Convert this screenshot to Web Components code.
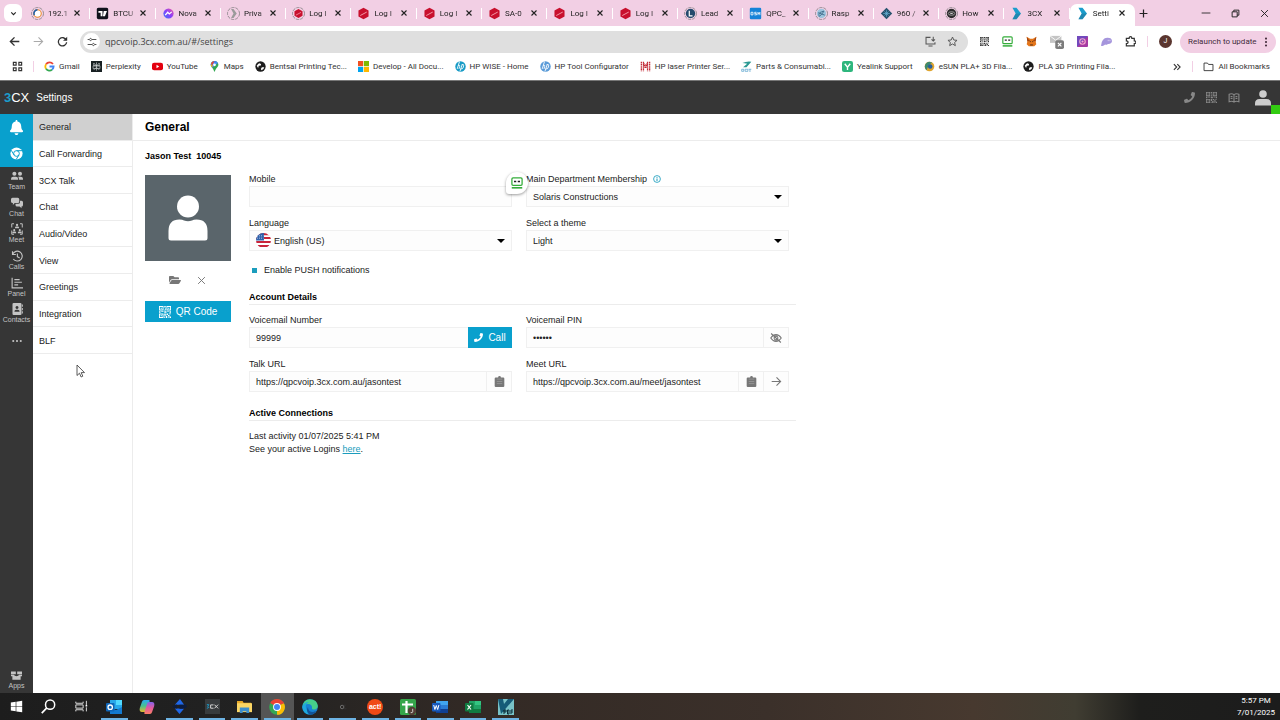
<!DOCTYPE html>
<html lang="en">
<head>
<meta charset="utf-8">
<title>Settings</title>
<style>
html,body{margin:0;height:100%}
body{font-family:"Liberation Sans",Arial,sans-serif;font-size:9px;color:#222;background:#fff}
desktop-shell{min-height:100vh}
</style>
</head>
<body>
<desktop-shell></desktop-shell>
<script>
const base = `*{box-sizing:border-box}button{font:inherit;color:inherit;background:none;border:0;padding:0;margin:0;cursor:pointer}a{color:inherit;text-decoration:none}`;
function define(name, css, html) {
  customElements.define(name, class extends HTMLElement {
    constructor() {
      super();
      this.attachShadow({ mode: 'open' }).innerHTML =
        `<style>${base}${css}</style>` + (typeof html === 'function' ? html(this) : html);
    }
  });
}
const box = (s, vb = '0 0 16 16') => `<svg viewBox="${vb}" aria-hidden="true">${s}</svg>`;
const line = (d, w = 1.6) => box(`<path d="${d}" fill="none" stroke="currentColor" stroke-width="${w}"/>`);
const ring = inner => box(`<circle cx="8" cy="8" r="7.4" fill="none" stroke="#777" stroke-width=".9" stroke-dasharray="4 1.2"/>${inner}`);
const person = (x, y, s) => `<g transform="translate(${x} ${y}) scale(${s})"><circle cx="5" cy="3" r="2.8"/><path d="M0 11V9.6Q0 6.6 3 6.6h4q3 0 3 3V11z"/></g>`;
const phone = 'M493.4 24.6l-104-24c-11.3-2.6-22.9 3.3-27.5 13.9l-48 112c-4.2 9.8-1.4 21.3 6.9 28l60.6 49.6c-36 76.7-98.9 140.5-177.2 177.2l-49.6-60.6c-6.8-8.3-18.2-11.1-28-6.9l-112 48C3.9 366.5-2 378.1.6 389.4l24 104C27.1 504.2 36.7 512 48 512c256.1 0 464-207.5 464-464 0-11.2-7.7-20.9-18.6-23.4z';
const red = '<path d="M8 1l6.2 3.4v7.2L8 15l-6.2-3.4V4.4z" fill="#c8102e"/><path d="M4 10.5l8-4.3" stroke="#f7a6b4" stroke-width="1.1"/>';
const robo = '<rect x="1.2" y="1.2" width="13.6" height="10" rx="1.5" fill="none" stroke="#35ad3b" stroke-width="1.7"/><path d="M4 6h3M9 6h3" stroke="#222" stroke-width="2"/><path d="M1 14.4h14" stroke="#35ad3b" stroke-width="2.2"/>';
const globe = '<circle cx="8" cy="8" r="7.5" fill="#1d1d1d"/><path d="M2.5 7q3-4 5-3.500t1 3l-3 .5-1 3zM10 9h3.500q-1 4-4 4.500l-1-2z" fill="#fff"/>';
const qr = '<path fill-rule="evenodd" d="M0 0h6v6H0zM1.200 1.200v3.600h3.600V1.200zM10 0h6v6h-6zM11.200 1.200v3.600h3.600V1.200zM0 10h6v6H0zM1.200 11.200v3.600h3.600v-3.600zM2.200 2.200h1.600v1.600H2.200zM12.200 2.200h1.600v1.600h-1.600zM2.200 12.200h1.600v1.600H2.200zM7 0h2v2H7zM8 3h1v3H7V5h1zM0 7h2v2H0zM3 7h3v1H3zM7 7h3v2H7zM11 7h2v1h-2zM14 7h2v2h-2zM10 10h2v2h-2zM13 10h3v1h-3zM7 10h2v3H7zM9 13h2v3H9zM12 12h2v2h-2zM14 14h2v2h-2zM12 15h1v1h-1zM7 14h1v2H7z"/>';
const hp = c => box(`<circle cx="8" cy="8" r="7.6" fill="${c}"/><path d="M6.500 1L3.200 11.500M4.800 6.500q3-1 2 1.500L5.800 11.500M10.500 5L7.200 15M9.800 5.200q3.500-.8 2.800 1.800l-1 3.300q-.6 1.400-3.200 1.200" fill="none" stroke="#fff" stroke-width="1.300"/>`);
const ICONS = {
  chev: line('M4 6l4 4 4-4', 2), x: line('M3 3l10 10M13 3L3 13', 2.200), xthin: line('M2 2l12 12M14 2L2 14', 1.700),
  plus: line('M8 1v14M1 8h14', 2.200), min: line('M1 8h14', 1.400),
  restore: line('M2 5h9v9H2zM5 5V2h9v9h-3', 1.700),
  back: line('M15 8H2M8 2L2 8l6 6', 2), fwd: line('M1 8h13M8 2l6 6-6 6', 1.600),
  reload: box('<path d="M13.500 6A6 6 0 1 0 14 9" fill="none" stroke="currentColor" stroke-width="1.900"/><path d="M14.800 1v6h-6z" fill="currentColor"/>'),
  tune: line('M1 4h2.500M8 4h7M1 12h7M12.500 12H15M5.700 2.200a1.800 1.800 0 1 0 .01 0M10.300 10.200a1.800 1.800 0 1 0 .01 0', 1.600),
  install: line('M8 2H1.500v9.500h13V9M5 14.500h6M12 1v6M9.500 4.800L12 7.300l2.500-2.500', 1.500),
  star: line('M8 1.500l1.900 4.300 4.700.5-3.500 3.100 1 4.600L8 11.600 3.900 14l1-4.600L1.400 6.300l4.700-.5z', 1.400),
  dots: box('<g fill="currentColor"><circle cx="8" cy="2.500" r="1.700"/><circle cx="8" cy="8" r="1.700"/><circle cx="8" cy="13.500" r="1.700"/></g>'),
  hdots: box('<g fill="currentColor"><circle cx="2" cy="8" r="1.700"/><circle cx="8" cy="8" r="1.700"/><circle cx="14" cy="8" r="1.700"/></g>'),
  puzzle: line('M2 3.500h4Q6 1 8 1t2 2.500h3.500V7Q16 7 16 9t-2.500 2v3.500H2V11q2.500 0 2.500-2T2 7z', 1.800),
  grid: line('M2 2h4v4H2zM10 2h4v4h-4zM2 10h4v4H2zM10 10h4v4h-4z', 1.700),
  more: line('M3 3.500L7.500 8 3 12.500M8.500 3.500L13 8l-4.500 4.500', 1.700),
  folder: line('M1.500 3h5l1.500 2h6.500v9h-13z', 1.300),
  f192: ring('<circle cx="8" cy="8" r="4.600" fill="#fff" stroke="#e98b2a" stroke-width="1.300"/><path d="M4 10a4.600 4.600 0 0 1 4-6.600" fill="none" stroke="#1d5fa8" stroke-width="2"/>'),
  tv: box('<rect x="1" y="1" width="14" height="14" rx="2" fill="#10131c"/><path d="M3 5h5v6.500H5.700V7H3zM9.500 5h4L11 11.500H8.500z" fill="#fff"/>'),
  nova: box('<defs><linearGradient id="g" x1="0" y1="1" x2="1" y2="0"><stop stop-color="#3478f6"/><stop offset=".5" stop-color="#8a3ffc"/><stop offset="1" stop-color="#f5569b"/></linearGradient></defs><circle cx="8" cy="8" r="6.300" fill="url(#g)"/><path d="M4 10l3-3.500 2 2L12 6" fill="none" stroke="#fff" stroke-width="1.600"/>'),
  priv: ring('<path d="M5 2.500h3L12 8l-4 5.500H5L8 8z" fill="#9b9b9b"/>'),
  logring: ring('<g transform="translate(1.600 1.600) scale(.8)">' + red + '</g>'), log: box(red),
  lead: ring('<circle cx="8" cy="8" r="5.800" fill="#234a6c"/><path d="M6.500 4.500v6.500h4" fill="none" stroke="#fff" stroke-width="1.500"/>'),
  osm: box('<rect x="1" y="1" width="14" height="14" rx="1.500" fill="#1683d8"/><path d="M2.500 6.500h2.400v3.200H2.500zM9.300 6.500H7v1.600h2.200v1.600H6.700M11 10V6.500l1.200 2 1.200-2V10" fill="none" stroke="#fff" stroke-width="1"/>'),
  rasp: ring('<circle cx="8" cy="8" r="5.700" fill="#9cc5dd"/><path d="M5 11q-1-4 3-5l3-1-2 3-4 4M4 7l8 3" fill="none" stroke="#44708e" stroke-width="1.200"/>'),
  d960: box('<path d="M8 1l7 7-7 7-7-7z" fill="#27536e"/><path d="M8 4v8M4 8h8M5.500 5.500l5 5M10.500 5.500l-5 5" stroke="#69b5d8" stroke-width=".8"/>'),
  how: ring('<circle cx="8" cy="8" r="5.800" fill="#2b2b2b"/><ellipse cx="8" cy="8" rx="4" ry="2.200" fill="none" stroke="#aaa"/><path d="M6.500 8h3" stroke="#ccc" stroke-width="1.500"/>'),
  tcx: box('<path d="M3 1h5l5.500 7L8 15H3l4-7z" fill="#1b9dcc"/><path d="M3 15l4-7h6.500L8 15z" fill="#27627f" opacity=".35"/>'),
  qr: box(`<g fill="currentColor">${qr}</g>`), robo: box(robo),
  fox: box('<path d="M1 1l5 3h4l5-3-1 7 1 4-3 3H4l-3-3 1-4z" fill="#e4761b"/><path d="M5 7l2 1.500M11 7L9 8.500M6 13h4" stroke="#442a17" stroke-width="1.300"/><path d="M1 1l4 6-3 1zM15 1l-4 6 3 1z" fill="#9c4315"/>'),
  mail: box('<path d="M0 1h13v8H0z" fill="#c4c4c4"/><path d="M0 1l6.500 5L13 1" fill="none" stroke="#fff"/><rect x="6" y="6" width="10" height="10" rx="2" fill="#7c7c7c"/><path d="M9 9l4 4M13 9l-4 4" stroke="#fff" stroke-width="1.300"/>'),
  shot: box('<rect width="16" height="16" rx="1.500" fill="#a53aa2"/><path d="M0 0h16L0 16z" fill="#7149bd"/><circle cx="8" cy="8" r="4" fill="none" stroke="#f4a5cc" stroke-width="1.700"/><circle cx="8" cy="8" r="1.500" fill="#f7b0d0"/>'),
  ghost: box('<path d="M0 14Q1 3 9 2.500q7-.2 7 5-1 4.500-6 4-2 2-4 1-3 3-6 1.500z" fill="#a595dc"/><path d="M10.500 5.500v2M13 5.500v2" stroke="#fff" stroke-width=".8"/>'),
  google: box('<g fill="none" stroke-width="2.600"><path d="M13 4.500A6 6 0 0 0 3 4.700" stroke="#ea4335"/><path d="M3 4.700a6 6 0 0 0 0 6.600" stroke="#fbbc05"/><path d="M3 11.300a6 6 0 0 0 8.800 1.200" stroke="#34a853"/><path d="M11.800 12.500Q14 10.500 14 8H8" stroke="#4285f4"/></g>'),
  perp: box('<rect width="16" height="16" fill="#182022"/><path d="M8 2v12M4 3l4 4 4-4v4H4zM3 7h10v4H3zM4 13l4-4 4 4" fill="none" stroke="#d4dad9" stroke-width=".9"/>'),
  yt: box('<rect y="2.500" width="16" height="11" rx="3" fill="#e3000f"/><path d="M6.500 5.500l4 2.500-4 2.500z" fill="#fff"/>'),
  maps: box('<path d="M8 16Q7 12 4 9a5.400 5.400 0 1 1 8 0q-3 3-4 7z" fill="#34a853"/><path d="M3.800 2.200A5.500 5.500 0 0 1 13 3L5 9.800Q1 6 3.800 2.200z" fill="#4285f4"/><path d="M3 4.500L5.500 7 4.500 9.500Q2 7 3 4.500z" fill="#fbbc05"/><path d="M3.800 2.200A5.500 5.500 0 0 1 8 .2L4.500 6 3 4.500z" fill="#ea4335"/><circle cx="8" cy="5.500" r="2" fill="#fff"/>'),
  globe: box(globe),
  ms: box('<path d="M0 0h7.500v7.500H0z" fill="#f25022"/><path d="M8.500 0H16v7.500H8.500z" fill="#7fba00"/><path d="M0 8.500h7.500V16H0z" fill="#00a4ef"/><path d="M8.500 8.500H16V16H8.500z" fill="#ffb900"/>'),
  hp1: hp('#189bc6'), hp2: hp('#5a9bd8'),
  laser: box('<path d="M2 1v14M5 1v14M11 1v14M14 1v14M5 3l3 4 3-4M5 6l3 4 3-4" fill="none" stroke="#c22a36" stroke-width="1.900" stroke-dasharray="2 .7"/>'),
  dot: box('<path d="M2 3Q8 0 15 1L8 9H3l6-5q-4-1-7-1z" fill="#2b9a93"/><path d="M1 12h3v3H1zM6 12h4v3H6zM11 12h4M13 12v4" fill="none" stroke="#4e9dcb" stroke-width="1"/>'),
  yea: box('<rect width="16" height="16" rx="3" fill="#2eb67d"/><path d="M4 4l4 5 4-5M8 9v4" fill="none" stroke="#fff" stroke-width="2"/>'),
  esun: box('<circle cx="8" cy="8" r="7" fill="#e0a52e"/><path d="M8 1a7 7 0 0 0-4 12.500Q6 5 12 2.500z" fill="#3d8a6f"/><circle cx="9" cy="8" r="3.300" fill="#265f9d"/>'),
  phone: box(`<path fill="currentColor" d="${phone}"/>`, '0 0 512 512'),
  book: line('M8 3.500Q5 1.500 1.500 3v10Q5 11.500 8 13.500 11 11.500 14.500 13V3Q11 1.500 8 3.500v10M3.500 6h2.500M3.500 8.500h2.500M10 6h2.500M10 8.500h2.500', 1.500),
  user: box('<g fill="currentColor"><circle cx="8" cy="4" r="3.800"/><path d="M0 15.500v-2Q0 9 4.500 9h7Q16 9 16 13.500v2z"/></g>'),
  portrait: box('<g fill="currentColor"><circle cx="23" cy="11.500" r="11"/><path d="M3.500 43V36q0-11.500 11-11.500 3 0 4.500 1 4 1.300 8 0 1.500-1 4.500-1 11 0 11 11.500v7q0 2.500-2.500 2.500H6q-2.500 0-2.500-2.500z"/></g>', '0 0 46 46'),
  bell: box('<path fill="currentColor" d="M224 512c35.320 0 63.970-28.650 63.970-64H160.030c0 35.350 28.650 64 63.970 64zm215.390-149.710c-19.320-20.760-55.470-51.990-55.470-154.290 0-77.700-54.480-139.900-127.940-155.160V32c0-17.670-14.320-32-31.980-32s-31.980 14.330-31.980 32v20.840C118.560 68.100 64.080 130.300 64.080 208c0 102.300-36.150 133.530-55.470 154.290-6 6.450-8.660 14.160-8.610 21.710.11 16.400 12.980 32 32.100 32h383.800c19.120 0 32-15.600 32.100-32 .05-7.550-2.610-15.270-8.610-21.710z"/>', '0 0 448 512'),
  chromew: box('<circle cx="8" cy="8" r="7.500" fill="#fff"/><g fill="none" stroke="#09a0cd" stroke-width="1.200"><circle cx="8" cy="8" r="3.500"/><path d="M8 4.500h7M5 9.800L1.500 4M11 9.800L7.500 15.500"/></g>'),
  team: box(`<g fill="currentColor"><circle cx="4.500" cy="5" r="2.700"/><path d="M0 13v-1.500Q0 9 3 9h3.500q3 0 3 2.500V13z"/><circle cx="12" cy="5" r="2.700"/><path d="M10 9h3q3 0 3 2.500V13h-5.300q.2-3-1.200-4z"/></g>`),
  chat: box('<path fill="currentColor" d="M2 1h7q2 0 2 2v3q0 2-2 2H5L2.500 10.500V8Q0 8 0 6V3q0-2 2-2zM12 5h2q2 0 2 2v3.500q0 2-2 2v2.500L11.500 12.500H8q-2 0-2-2V9h3.500Q12 9 12 6.500z"/>'),
  meet: box(`<g fill="none" stroke="currentColor" stroke-width="1.300"><path d="M4 1H1v5M12 1h3v5M1 10v5h3M15 10v5h-3"/></g><g fill="currentColor">${person(5.300, 1, .55)}${person(1.800, 8, .5)}${person(9.200, 8, .5)}</g>`),
  calls: line('M2 1.500v4.500h4.500M2.300 5.500A6.600 6.600 0 1 1 3 12M8.500 4.500V9l3 1.500', 1.500),
  panel: line('M1.500 1v13.500H16M4.500 3.500h7M4.500 7h10M4.500 10.500h5', 1.500),
  contacts: box('<path fill="currentColor" fill-rule="evenodd" d="M3.500 0h9Q14 0 14 1.500v13q0 1.500-1.500 1.500h-9Q2 16 2 14.500v-13Q2 0 3.500 0zM8 4a2 2 0 1 0 .01 0M4.500 11.800h7Q11.500 9 9 9H7q-2.500 0-2.500 2.800zM14.600 2h1.200v3h-1.200zM14.600 6.500h1.200v3h-1.200zM14.600 11h1.200v3h-1.200z"/>'),
  apps: box('<path fill="currentColor" d="M0 2h7v4H0zM9 2h7v4H9zM0 7h4q1.500 2 4 2t4-2h4v2h-2v5H2V9H0z"/>'),
  folderopen: box('<path fill="currentColor" d="M572.694 292.093L500.270 416.248A63.997 63.997 0 0 1 444.989 448H45.025c-18.523 0-30.064-20.093-20.731-36.093l72.424-124.155A64 64 0 0 1 152 256h399.964c18.523 0 30.064 20.093 20.730 36.093zM152 224h328v-48c0-26.510-21.490-48-48-48H272l-64-64H48C21.490 64 0 85.490 0 112v278.046l69.077-118.418C86.214 242.250 117.989 224 152 224z"/>', '0 0 576 512'),
  info: box('<circle cx="8" cy="8" r="6.800" fill="none" stroke="currentColor" stroke-width="1.700"/><path d="M8 7v5M8 4v1.700" stroke="currentColor" stroke-width="2"/>'),
  clip: box('<path fill="currentColor" fill-rule="evenodd" d="M2.500 2H6Q6 0 8 0t2 2h3.500Q15 2 15 3.500v11q0 1.500-1.500 1.500h-11Q1 16 1 14.500v-11Q1 2 2.500 2z"/><path d="M4 4.500h8M4 8h8M4 11h8" stroke="#aaa" stroke-width=".8"/>'),
  eye: line('M1 8q3-4.500 7-4.500T15 8q-3 4.500-7 4.500T1 8zM8 5.500a2.500 2.500 0 1 0 .01 0M1.500 2l13 12', 1.400),
  flag: box('<defs><clipPath id="c"><circle cx="8" cy="8" r="8"/></clipPath></defs><g clip-path="url(#c)"><path d="M0 0h16v16H0z" fill="#fff"/><path d="M0 1.200h16M0 5.400h16M0 9.600h16M0 13.900h16" stroke="#c8253b" stroke-width="2.200"/><path d="M0 0h8.500v8H0z" fill="#2f62ad"/><path d="M1 3h7M1 5.500h7" stroke="#dfe8f5" stroke-width=".8" stroke-dasharray="1 1.200"/></g>'),
  win: box('<path fill="#fff" d="M1 3l6-.9v5.500H1zM7.800 2L15 1v6.600H7.800zM1 8.400h6v5.500L1 13zM7.800 8.400H15V15l-7.200-1z"/>'),
  search: box('<circle cx="9.700" cy="6" r="4.900" fill="none" stroke="#fff" stroke-width="1.600"/><path d="M6.200 9.500L.8 15" stroke="#fff" stroke-width="1.800"/>'),
  task: box('<path d="M1 2v2h9V2M1 14v-2h9v2M1 6h9v4H1zM14 1v5M14 9v5" fill="none" stroke="#ddd" stroke-width="1.200"/><path d="M13 6h2v2h-2z" fill="#fff"/>'),
  outlook: box('<rect x="4" y="1" width="12" height="9" fill="#28a8ea"/><path d="M4 8l6 3 6-3v7H4z" fill="#137ad1"/><path d="M10 1h6v5h-6z" fill="#50d9ff"/><rect y="4" width="8.500" height="8.500" rx="1" fill="#0f66b9"/><circle cx="4.200" cy="8.200" r="2.200" fill="none" stroke="#fff" stroke-width="1.300"/>'),
  copilot: box('<defs><linearGradient id="a" x2="0" y2="1"><stop stop-color="#28a9f1"/><stop offset=".5" stop-color="#49c08d"/><stop offset="1" stop-color="#e4b82d"/></linearGradient><linearGradient id="b" x2="0" y2="1"><stop stop-color="#8362ec"/><stop offset=".5" stop-color="#e3599d"/><stop offset="1" stop-color="#fa8063"/></linearGradient></defs><path d="M5 1h5q1 0 .6 1.500L8 11q-.5 2-2 2H3Q0 13 .8 9L3 2.800Q3.500 1 5 1z" fill="url(#a)"/><path d="M11 15H6q-1 0-.6-1.500L8 5q.5-2 2-2h3q3 0 2.200 4L13 13.200Q12.500 15 11 15z" fill="url(#b)"/>'),
  blue: box('<path d="M3 6l5.500-6L13 6zM3 10h10l-5 6z" fill="#1f67e8"/><path d="M0 8l5-2.500v5zM8 6h7l1 2.500-4 2H8z" fill="#0c1c40"/>'),
  cxapp: box('<rect width="16" height="16" fill="#373b3d"/><path d="M2 6h2L3 8l1 1-2 1" fill="none" stroke="#1b9dcc"/><path d="M9 6.300H6v3.500h3M10 6l4 4M14 6l-4 4" fill="none" stroke="#ddd"/>'),
  files: box('<path d="M0 2h6l1 2h8v3H0z" fill="#e8a928"/><path d="M0 4.500h16V14H0z" fill="#fbd665"/><path d="M3 15V9h10v6h-3v-2H6v2z" fill="#3d8fce"/>'),
  chrome: box('<circle cx="8" cy="8" r="7.800" fill="#34a853"/><path d="M8 8L1.200 4A7.800 7.800 0 0 1 14.800 4z" fill="#ea4335"/><path d="M8 8l6.800-4A7.800 7.800 0 0 1 8 15.800z" fill="#fbbc05"/><path d="M8 4h6.800" stroke="#ea4335"/><circle cx="8" cy="8" r="3.900" fill="#fff"/><circle cx="8" cy="8" r="3" fill="#4285f4"/>'),
  edge: box('<circle cx="8" cy="8" r="7.800" fill="#1783d3"/><path d="M.5 7Q2 0 8 .2q7 .3 7.800 6.500Q16 10 12 10.500q-2.500 0-2-2Q10 5 6 5 2 5 .5 7z" fill="#46cf8a"/><path d="M.4 7.500Q2 3 7 3q-4 2-3 6 1 5 7 5-9 4-10.800-6z" fill="#1fa9dc"/><path d="M6 8q0 5 5 5l3-1q-2 4-6 3.800Q3 13 6 8z" fill="#125499"/>'),
  tiny: box('<circle cx="7" cy="8" r="2" fill="none" stroke="#777"/><path d="M9 6h2M9 10h3" stroke="#333"/>'),
  sheet: box('<rect width="16" height="16" rx="1.500" fill="#35a64a"/><path d="M2 5.500h11M6.500 2v12" stroke="#fff" stroke-width="2.200"/><circle cx="12" cy="12" r="4.200" fill="#533f36"/><path d="M12.700 9.800v3q0 1.200-2 .8" fill="none" stroke="#ddd" stroke-width=".9"/>'),
  word: box('<rect x="4" y="2" width="12" height="12" fill="#2b7cd3"/><path d="M4 2h12v4H4z" fill="#41a5ee"/><path d="M4 10h12v4H4z" fill="#103f91"/><rect y="4" width="8.500" height="8.500" rx="1" fill="#185abd"/><path d="M1.700 6l1.200 4.500L4.300 6.500l1.400 4L6.900 6" fill="none" stroke="#fff"/>'),
  excel: box('<rect x="4" y="2" width="12" height="12" fill="#21a366"/><path d="M10 2h6v4h-6z" fill="#33c481"/><path d="M4 10h12v4H4z" fill="#107c41"/><rect y="4" width="8.500" height="8.500" rx="1" fill="#107c41"/><path d="M2.500 6l3.500 4.500M6 6l-3.500 4.500" stroke="#fff" stroke-width="1.200"/>'),
  pdf: box('<path d="M0 0h16v16H0z" fill="#78c2c7"/><path d="M0 0h5l1 5 4-5h6L3 15z" fill="#155b78"/><path d="M6 11h2v2H6zM6 11v4M9.500 11v4h1.500v-4zM13 15v-4h2M13 13h2" fill="none" stroke="#0b2b38"/>'),
};
customElements.define('ui-icon', class extends HTMLElement {
  constructor() {
    super();
    this.attachShadow({ mode: 'open' }).innerHTML =
      `<style>:host{display:block;flex:none;width:var(--size,11px);height:var(--size,11px)}svg{display:block;width:100%;height:100%}</style>${ICONS[this.getAttribute('name')]}`;
  }
});
const icon = (name, size = 11) => `<ui-icon name="${name}" style="--size:${size}px"></ui-icon>`;

define('browser-tab', `
:host{display:block;flex:1 1 0;min-width:0;height:26px;padding-top:4px}
.tab{position:relative;display:flex;align-items:center;height:22px;padding:0 7px 4px 6px;border-radius:7px 7px 0 0}
:host([active]) .tab{background:#fff}
:host(:not([active])) .tab::after{content:"";position:absolute;right:0;top:4px;width:1px;height:11px;background:#fff}
.title{flex:1;display:flex;align-items:center;gap:4px;min-width:0;height:18px}
.text{flex:1;min-width:0;overflow:hidden;text-align:left;white-space:nowrap;-webkit-mask:linear-gradient(90deg,#000 65%,transparent)}
.close{padding:2px}`,
  el => `<div class="tab"><button class="title">${icon(el.getAttribute('icon'), 13)}<span class="text"><slot></slot></span></button><button class="close" aria-label="Close tab">${icon('x', 8)}</button></div>`);

const tabs = [['f192', '192.1'], ['tv', 'BTCU'], ['nova', 'Nova'], ['priv', 'Priva'], ['logring', 'Log I'], ['log', 'Log I'], ['log', 'Log I'], ['log', 'SA-0'], ['log', 'Log I'], ['log', 'Log I'], ['lead', 'Lead'], ['osm', 'QPC_'], ['rasp', 'Rasp'], ['d960', '960 /'], ['how', 'How'], ['tcx', '3CX'], ['tcx', 'Setti', 1]];
define('tab-strip', `
:host{display:flex;align-items:center;height:26px;background:#f2cfe4;color:#222}
.all{display:grid;place-items:center;width:18px;height:18px;margin:0 3px 0 4px;border-radius:6px;background:#fff}
.tabs{display:flex;flex:1;min-width:0}
.new{margin:0 53px 0 4px}
.window{display:flex;align-items:center;gap:20px;padding-right:11px}`,
  `<button class="all" aria-label="Search tabs">${icon('chev', 9)}</button>
<div class="tabs">${tabs.map(t => `<browser-tab icon="${t[0]}"${t[2] ? ' active' : ''}>${t[1]}</browser-tab>`).join('')}</div>
<button class="new" aria-label="New tab">${icon('plus', 9)}</button>
<div class="window"><button aria-label="Minimise">${icon('min', 10)}</button><button aria-label="Restore">${icon('restore', 9)}</button><button aria-label="Close">${icon('xthin', 9)}</button></div>`);

define('browser-toolbar', `
:host{display:flex;align-items:center;height:31px;padding:0 4px 0 9px;background:#fff;color:#333}
.nav{display:flex;gap:13px;margin-right:12px}
.nav button:nth-child(2){color:#aaa}
.address{flex:1;min-width:0;display:flex;align-items:center;gap:11px;height:22px;padding:0 10px 0 3px;border-radius:11px;background:#dfdfdf;color:#555}
.site{display:grid;place-items:center;width:17px;height:17px;border-radius:50%;background:#fff}
input{flex:1;min-width:0;margin-left:-6px;border:0;padding:0;background:none;color:#444;font:9px "Open Sans","Noto Sans",sans-serif;outline:0}
.ext{display:flex;align-items:center;gap:13px;margin:0 8px 0 12px}
.me{width:13px;height:13px;border-radius:50%;background:#5a352f;color:#fff;font-size:7px;line-height:13px}
.sep{width:1px;height:11px;margin:0 -2px;background:#f2cfe4}
.update{display:flex;align-items:center;justify-content:space-between;gap:4px;width:96px;height:22px;padding:0 6px 0 8px;border-radius:11px;background:#f2cfe4;color:#432c3b;white-space:nowrap}`,
  `<div class="nav"><button aria-label="Back">${icon('back')}</button><button aria-label="Forward">${icon('fwd')}</button><button aria-label="Reload">${icon('reload')}</button></div>
<div class="address"><button class="site" aria-label="Site information">${icon('tune', 10)}</button><input aria-label="Address" value="qpcvoip.3cx.com.au/#/settings"><button aria-label="Install">${icon('install')}</button><button aria-label="Bookmark">${icon('star')}</button></div>
<div class="ext">${['qr', 'robo', 'fox', 'mail', 'shot', 'ghost', 'puzzle'].map(n => `<button aria-label="Extension">${icon(n, n === 'qr' ? 9 : n === 'mail' ? 14 : 11)}</button>`).join('')}<span class="sep"></span><button class="me">J</button></div>
<button class="update">Relaunch to update ${icon('dots', 10)}</button>`);

const marks = [['google', 'Gmail'], ['perp', 'Perplexity'], ['yt', 'YouTube'], ['maps', 'Maps'], ['globe', 'Bentsai Printing Tec...'], ['ms', 'Develop - All Docu...'], ['hp1', 'HP WISE - Home'], ['hp2', 'HP Tool Configurator'], ['laser', 'HP laser Printer Ser...'], ['dot', 'Parts & Consumabl...'], ['yea', 'Yealink Support'], ['esun', 'eSUN PLA+ 3D Fila...'], ['globe', 'PLA 3D Printing Fila...']];
define('bookmark-bar', `
:host{display:flex;align-items:center;height:23px;padding:0 10px 4px 12px;background:#fff;color:#333;white-space:nowrap}
a{display:flex;align-items:center;gap:4px}
.sep{width:1px;height:11px;margin:0 10px;background:#f2cfe4}
nav{flex:1;min-width:0;display:flex;gap:11px;overflow:hidden}
.more{margin-left:10px}`,
  `<button aria-label="Apps">${icon('grid')}</button><span class="sep"></span>
<nav>${marks.map(m => `<a href="#">${icon(m[0])}<span>${m[1].replace('&', '&amp;')}</span></a>`).join('')}</nav>
<button class="more" aria-label="More bookmarks">${icon('more', 10)}</button><span class="sep"></span>
<a href="#">${icon('folder')}<span>All Bookmarks</span></a>`);

define('app-header', `
:host{position:relative;display:flex;align-items:center;height:34px;padding:0 9px 0 4px;border-top:1px solid #777;background:#363636;color:#fff}
.logo{display:flex;font-size:13px;margin-right:7px}.logo b{color:#1b9dcc}
h1{flex:1;margin:0;font-size:10px;font-weight:400}
.tools{display:flex;align-items:center;gap:11px;color:#888}
.me{color:#ccc;margin-left:4px}
.status{position:absolute;right:0;bottom:0;width:9px;height:9px;background:#3c1}`,
  `<a class="logo" href="#"><b>3</b>CX</a><h1>Settings</h1>
<div class="tools"><button aria-label="Dialer">${icon('phone')}</button><button aria-label="QR code">${icon('qr')}</button><button aria-label="Phonebook">${icon('book', 12)}</button><button class="me" aria-label="Profile">${icon('user', 16)}</button></div><span class="status"></span>`);

define('nav-rail', `
:host{display:flex;flex-direction:column;justify-content:space-between;width:33px;background:#363636;color:#c4c4c4;font-size:7px}
nav{display:grid;grid-auto-rows:1fr;height:240px}
a{display:flex;flex-direction:column;align-items:center;justify-content:center;gap:1px;line-height:8px}
a.hot{background:#09a0cd;color:#fff}
.apps{padding-bottom:3px}`,
  `<nav><a class="hot" href="#" aria-label="Notifications">${icon('bell', 15)}</a><a class="hot" href="#" aria-label="Web client">${icon('chromew', 13)}</a>
${[['team', 'Team'], ['chat', 'Chat'], ['meet', 'Meet'], ['calls', 'Calls'], ['panel', 'Panel'], ['contacts', 'Contacts']].map(r => `<a href="#">${icon(r[0], 12)}<span>${r[1]}</span></a>`).join('')}<a href="#" aria-label="More">${icon('hdots', 10)}</a></nav>
<a class="apps" href="#">${icon('apps', 11)}<span>Apps</span></a>`);

define('settings-menu', `
:host{display:block;width:100px;border-right:1px solid #ececec;background:#fff}
nav{display:grid;grid-auto-rows:1fr;height:240px}
a{display:flex;align-items:center;padding:1px 6px 0;border-bottom:1px solid #ececec}
a[aria-current]{background:#d0d0d0}`,
  `<nav>${['General', 'Call Forwarding', '3CX Talk', 'Chat', 'Audio/Video', 'View', 'Greetings', 'Integration', 'BLF'].map((t, i) => `<a href="#"${i ? '' : ' aria-current="page"'}>${t}</a>`).join('')}</nav>`);

define('form-field', `
:host{position:relative;display:block;min-width:0}
.label{display:flex;align-items:center;gap:6px;height:13px;padding-bottom:2px}
.control{display:flex;align-items:stretch;height:21px;border:1px solid #f0f0f0;background:#fdfdfd}`,
  `<div class="label"><slot name="label"></slot></div><div class="control"><slot></slot></div><slot name="over"></slot>`);

const select = (id, text, pre = '') => `${pre}<select id="${id}"><option>${text}</option></select>`;
define('settings-page', `
:host{display:block;min-width:0;background:#fff}
h2{display:flex;align-items:center;height:27px;margin:0;padding:0 12px;border-bottom:1px solid #ececec;font-size:12px;color:#000}
.who{margin:0;padding:9px 12px 0;font-size:9px;line-height:12px;color:#000;white-space:pre}
.body{display:flex;align-items:flex-start;gap:18px;padding:11px 12px}
.photo{width:86px;padding-top:2px}
.avatar{display:grid;place-items:center;height:86px;background:#5a656b;color:#fff}
.actions{display:flex;align-items:center;justify-content:center;gap:16px;padding:13px 2px 15px 0;color:#777}
.blue{display:flex;align-items:center;justify-content:center;gap:5px;height:21px;background:#09a0cd;color:#fff;font-size:10px}
.photo .blue{width:100%}
form{flex:1;min-width:0;max-width:547px}
.pair{display:grid;grid-template-columns:repeat(2,minmax(0,263px));gap:10px 14px}
input:not([type=checkbox]),select{flex:1;min-width:0;width:100%;border:0;margin:0;padding:0 6px;background:none;font:inherit;color:#222;outline:0}
select{appearance:none}
.pick{position:relative;display:flex;align-items:center;flex:1;min-width:0}
.pick::after{content:"";margin-right:6px;border:solid transparent;border-width:4px 4px 0;border-top-color:#000;pointer-events:none}
.pick ui-icon{margin-left:6px}.pick ui-icon + select{padding-left:3px}
.side{display:grid;place-items:center;width:25px;border-left:1px solid #f0f0f0;color:#777}
.call{width:44px;margin:-1px}
.check{display:flex;align-items:center;gap:7px;height:12px;margin:13px 0 15px 3px}
input[type=checkbox]{appearance:none;width:5px;height:5px;margin:0;background:#1b9dbd}
h3{margin:0 0 9px;padding-bottom:1px;border-bottom:1px solid #ececec;font-size:9px;line-height:12px;color:#000}
.links{margin-top:15px}
p{margin:0;line-height:13px}
p a{color:#1b9dbd;text-decoration:underline}
.info{color:#1b9dbd}
.badge{position:absolute;top:-1px;right:-16px;display:grid;place-items:center;width:22px;height:22px;border-radius:50% 50% 50% 3px;background:#fff;box-shadow:0 1px 3px #0006;z-index:1}`,
  `<h2>General</h2><p class="who"><b>Jason Test  10045</b></p>
<div class="body"><div class="photo"><div class="avatar">${icon('portrait', 46)}</div>
<div class="actions"><button aria-label="Choose picture">${icon('folderopen', 12)}</button><button aria-label="Remove picture">${icon('xthin', 9)}</button></div>
<button class="blue">${icon('qr', 12)}QR Code</button></div>
<form><div class="pair">
<form-field><label slot="label" for="mobile">Mobile</label><input id="mobile"><button type="button" class="badge" slot="over" aria-label="Fill form">${icon('robo', 12)}</button></form-field>
<form-field><label slot="label" for="dept">Main Department Membership</label><span slot="label" class="info">${icon('info', 8)}</span><div class="pick">${select('dept', 'Solaris Constructions')}</div></form-field>
<form-field><label slot="label" for="lang">Language</label><div class="pick">${select('lang', 'English (US)', icon('flag', 15))}</div></form-field>
<form-field><label slot="label" for="theme">Select a theme</label><div class="pick">${select('theme', 'Light')}</div></form-field></div>
<div class="check"><input type="checkbox" id="push" checked><label for="push">Enable PUSH notifications</label></div>
<h3>Account Details</h3><div class="pair">
<form-field><label slot="label" for="vm">Voicemail Number</label><input id="vm" value="99999"><button type="button" class="blue call">${icon('phone', 9)}Call</button></form-field>
<form-field><label slot="label" for="pin">Voicemail PIN</label><input id="pin" type="password" value="123456"><button type="button" class="side" aria-label="Show PIN">${icon('eye', 12)}</button></form-field>
<form-field><label slot="label" for="talk">Talk URL</label><input id="talk" value="https://qpcvoip.3cx.com.au/jasontest"><button type="button" class="side" aria-label="Copy">${icon('clip', 11)}</button></form-field>
<form-field><label slot="label" for="meet">Meet URL</label><input id="meet" value="https://qpcvoip.3cx.com.au/meet/jasontest"><button type="button" class="side" aria-label="Copy">${icon('clip', 11)}</button><button type="button" class="side" aria-label="Open">${icon('fwd', 11)}</button></form-field></div>
<h3 class="links">Active Connections</h3><p>Last activity 01/07/2025 5:41 PM</p><p>See your active Logins <a href="#">here</a>.</p></form></div>`);

const apps = [['win'], ['search', 0, 15], ['task'], ['outlook', 1, 16], ['copilot', 0, 16], ['blue', 1, 15], ['cxapp', 1, 15], ['files', 1, 15], ['chrome', 2, 16], ['edge', 1, 16], ['tiny', 1, 14], ['act', 1], ['sheet', 1, 16], ['word', 1, 16], ['excel', 1, 16], ['pdf', 1, 16]];
define('task-bar', `
:host{display:flex;justify-content:space-between;height:27px;background:linear-gradient(90deg,#1d1d1d 0,#222 20%,#332a25 38%,#3b302a 60%,#47392f 76%,#403d32 84%,#1e1e1c 89%,#1c1c1c);color:#fff}
.apps{display:flex;width:522px}
.apps button{position:relative;flex:1;display:grid;place-items:center}
.run::after{content:"";position:absolute;left:3px;right:3px;bottom:0;height:2px;background:#6db3e4}
.on{background:#555}
.act{display:grid;place-items:center;width:16px;height:16px;border-radius:50%;background:#f04a16;font:bold 7px "Liberation Sans",sans-serif}
.clock{display:grid;align-content:center;padding-right:5px;text-align:center;line-height:12px;font-size:8px}`,
  `<div class="apps">${apps.map(a => `<button aria-label="${a[0]}" class="${a[1] ? 'run' : ''}${a[1] === 2 ? ' on' : ''}">${a[0] === 'act' ? '<span class="act">act!</span>' : icon(a[0], a[2] || 13)}</button>`).join('')}</div><div class="clock"><span>5:57 PM</span><span>7/01/2025</span></div>`);

define('mouse-pointer', `:host{position:absolute;left:76px;top:364px;width:9px;height:14px;pointer-events:none}svg{display:block}`,
  `<svg viewBox="0 0 9 14" width="9" height="14"><path d="M1 1v10.500l2.500-2.300 1.600 3.800 1.700-.8-1.600-3.600h3.300z" fill="#fff" stroke="#333" stroke-width=".8"/></svg>`);

define('desktop-shell', `
:host{display:grid;grid-template-rows:auto auto 1fr auto;overflow:hidden}
.chrome{font-family:Roboto,"Noto Sans",sans-serif;font-size:8px}
main{display:grid;grid-template-columns:auto auto 1fr}`,
  `<div class="chrome"><tab-strip></tab-strip><browser-toolbar></browser-toolbar><bookmark-bar></bookmark-bar></div>
<app-header></app-header><main><nav-rail></nav-rail><settings-menu></settings-menu><settings-page></settings-page></main>
<task-bar class="chrome"></task-bar><mouse-pointer></mouse-pointer>`);
</script>
</body>
</html>
